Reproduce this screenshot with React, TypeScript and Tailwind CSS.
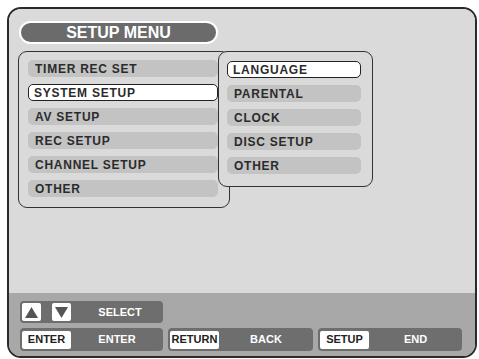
import React from "react";

const font = { fontFamily: '"Liberation Sans", Arial, sans-serif' };

function Row({ label, selected }: { label: string; selected?: boolean }) {
  return (
    <div
      className={
        "h-[17px] flex items-center rounded-[5px] text-[12px] font-bold tracking-[0.75px] text-[#2b2b2b] leading-none " +
        (selected ? "bg-white border-[1.5px] border-[#222] pl-[5px]" : "bg-[#c3c3c3] pl-[7px]")
      }
    >
      {label}
    </div>
  );
}

function Key({ children, w }: { children: React.ReactNode; w: string }) {
  return (
    <div className={"h-[18px] bg-white rounded-[2px] flex items-center justify-center text-[11px] font-bold text-[#222] " + w}>
      {children}
    </div>
  );
}

export default function App() {
  const left = ["TIMER REC SET", "SYSTEM SETUP", "AV SETUP", "REC SETUP", "CHANNEL SETUP", "OTHER"];
  const right = ["LANGUAGE", "PARENTAL", "CLOCK", "DISC SETUP", "OTHER"];
  return (
    <div className="w-[479px] h-[359px] bg-white pt-[7px] pl-[7px]" style={font}>
      <div className="w-[470px] h-[351px] border-2 border-[#2a2a2a] rounded-[14px] overflow-hidden flex flex-col">
        <div className="flex-1 bg-[#dadada] relative pt-[12px] pl-[10px]">
          <div className="w-[199px] h-[23px] rounded-full bg-[#6b6b6b] border-2 border-white flex items-center justify-center text-white text-[16px] font-bold leading-none">
            SETUP MENU
          </div>
          <div className="ml-[-1px] mt-[7px] w-[212px] h-[157px] border-[1.5px] border-[#333] rounded-[9px] pl-[9px] pt-[8px] flex flex-col gap-[7px]">
            {left.map((l, i) => (
              <div key={i} className="w-[190px]">
                <Row label={l} selected={i === 1} />
              </div>
            ))}
          </div>
          <div className="absolute left-[209px] top-[42px] w-[155px] h-[136px] bg-[#dadada] border-[1.5px] border-[#333] rounded-[9px] pl-[8px] pt-[9px] flex flex-col gap-[7px]">
            {right.map((l, i) => (
              <div key={i} className="w-[134px]">
                <Row label={l} selected={i === 0} />
              </div>
            ))}
          </div>
        </div>
        <div className="h-[63px] bg-[#a8a8a8] pl-[11px] pt-[8px] flex flex-col gap-[5px]">
          <div className="w-[143px] h-[22px] bg-[#6e6e6e] rounded-[4px] flex items-center pl-[2px]">
            <div className="w-[19px] h-[18px] bg-white rounded-[2px] flex items-center justify-center">
              <svg width="13" height="11" viewBox="0 0 13 11"><polygon points="6.5,0 13,11 0,11" fill="#555" /></svg>
            </div>
            <div className="ml-[11px] w-[19px] h-[18px] bg-white rounded-[2px] flex items-center justify-center">
              <svg width="13" height="11" viewBox="0 0 13 11"><polygon points="0,0 13,0 6.5,11" fill="#555" /></svg>
            </div>
            <div className="flex-1 text-center text-white text-[11px] font-bold pl-[6px]">SELECT</div>
          </div>
          <div className="flex gap-[5px]">
            <div className="w-[143px] h-[23px] bg-[#6e6e6e] rounded-[4px] flex items-center pl-[2px]">
              <Key w="w-[49px]">ENTER</Key>
              <div className="flex-1 text-center text-white text-[11px] font-bold">ENTER</div>
            </div>
            <div className="w-[145px] h-[23px] bg-[#6e6e6e] rounded-[4px] flex items-center pl-[2px]">
              <Key w="w-[49px]">RETURN</Key>
              <div className="flex-1 text-center text-white text-[11px] font-bold">BACK</div>
            </div>
            <div className="w-[144px] h-[23px] bg-[#6e6e6e] rounded-[4px] flex items-center pl-[2px]">
              <Key w="w-[49px]">SETUP</Key>
              <div className="flex-1 text-center text-white text-[11px] font-bold">END</div>
            </div>
          </div>
        </div>
      </div>
    </div>
  );
}
